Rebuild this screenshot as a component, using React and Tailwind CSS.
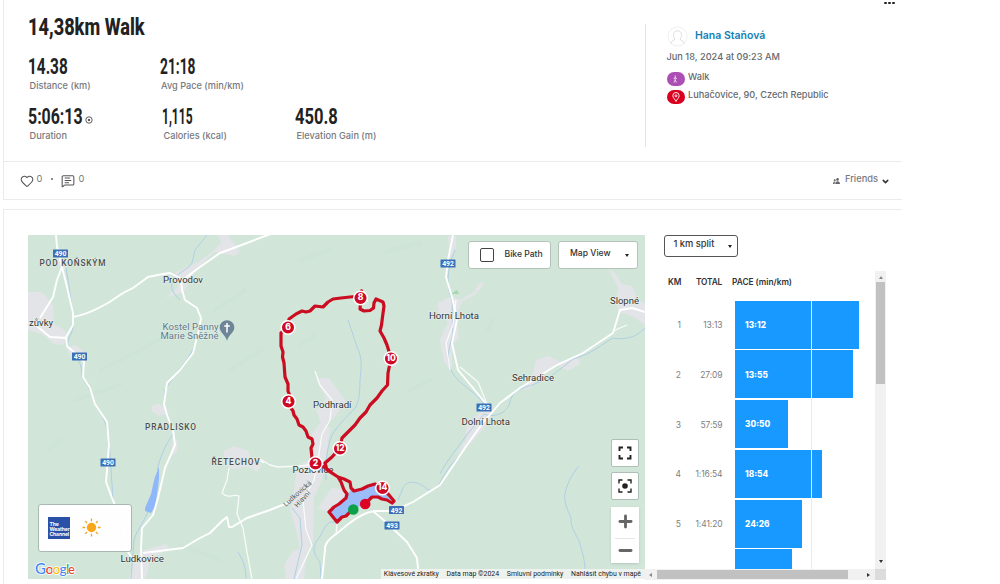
import React from "react";
import { Heart, MessageSquareText, Plus, Minus, ChevronDown } from "lucide-react";

const stats = [
  [
    { value: "14.38", label: "Distance (km)", width: "w-[131.5px]", scale: "scale-x-[0.715]" },
    { value: "21:18", label: "Avg Pace (min/km)", width: "w-[140px]", scale: "scale-x-[0.64]" },
  ],
  [
    { value: "5:06:13", label: "Duration", width: "w-[134px]", scale: "scale-x-[0.74]", info: true },
    { value: "1,115", label: "Calories (kcal)", width: "w-[133px]", scale: "scale-x-[0.56]" },
    { value: "450.8", label: "Elevation Gain (m)", width: "w-[120px]", scale: "scale-x-[0.77]" },
  ],
];

const splits = [
  { km: 1, total: "13:13", pace: "13:12", width: 124.5 },
  { km: 2, total: "27:09", pace: "13:55", width: 118 },
  { km: 3, total: "57:59", pace: "30:50", width: 53.5 },
  { km: 4, total: "1:16:54", pace: "18:54", width: 87 },
  { km: 5, total: "1:41:20", pace: "24:26", width: 67.5 },
  { km: "", total: "", pace: "", width: 57 },
];

const towns = [
  "28,292 42,292 53,305 54,324 66,331 64,345 54,344 42,334 28,330",
  "218,235 228,235 240,252 235,256 214,252 196,270 190,280 184,292 165,298 178,287 176,272 198,262 212,252 221,243",
  "66,348 76,345 84,352 80,360 70,356",
  "152,406 158,404 167,408 166,414 159,416 152,411",
  "56,260 64,258 66,270 60,268",
  "172,443 178,440 177,452 171,456",
  "224,451 234,446 249,451 250,459 262,464 257,472 248,467 232,469 223,464",
  "142,551 166,544 170,549 150,558 148,570 145,579 129,579 134,560",
  "313,369 316,378 329,378 342,396 346,402 334,418 322,426 316,410 326,398 318,384",
  "297,466 312,458 325,458 322,480 314,498 313,540 306,560 304,579 286,579 284,565 292,552 300,548 296,530 290,510 294,490",
  "312,434 322,420 330,428 326,458 315,462",
  "332,488 346,490 344,500 328,512 318,508",
  "448,236 456,236 456,248 450,258",
  "438,303 452,296 460,300 474,292 480,282 484,284 476,294 462,302 456,316 459,338 452,345 452,372 444,362 440,340 448,322 438,312",
  "536,360 549,356 560,362 578,356 580,364 568,371 556,364 544,374 530,388 524,390 532,376",
  "608,268 616,274 622,284 632,286 638,300 645,304 645,325 632,316 618,312 616,300 618,288",
  "466,426 474,418 482,410 494,412 484,428 472,442 462,450 456,454 466,440",
];

const rivers = [
  "M66,268C70,290 71,300 73,320C75,333 66,338 68,346C76,354 82,362 82,377C90,388 94,400 97,408C110,425 109,440 111,470L113,498",
  "M207,235L195,250L192,263C188,270 178,272 173,280C169,288 174,294 180,300",
  "M199,335C193,353 184,364 177,372L165,390L164,404",
  "M173,434C165,445 160,458 157,470M148,512C142,525 136,532 134,540L131,579",
  "M238,552C243,560 246,568 246,579",
  "M348,320C352,332 355,340 357,347C363,358 361,370 360,380C360,396 358,404 355,408C346,418 334,428 330,440C326,456 326,462 326,480",
  "M337,522L330,522C324,526 323,532 319,538C310,548 315,556 320,562L321,579",
  "M458,457L450,466L443,477C438,488 434,490 428,490C418,480 406,480 403,488L398,500",
  "M645,328C636,338 624,340 613,338C602,344 592,354 573,359L550,377L530,386C518,388 511,395 510,402C507,414 494,418 484,414L466,436C456,450 446,462 440,474",
  "M579,466C572,474 568,482 566,490C562,500 568,510 571,518C570,530 580,538 581,548C584,558 585,564 585,570",
  "M455,250C450,262 444,280 452,300L453,335C448,350 446,360 452,372C458,384 474,390 484,404",
  "M292,508L300,518L302,545L294,579",
];

const roads = [
  "M56,235L57,247L62,267L67,287L73,313L73,325L66,337L67,346L75,353L84,362L83,377L90,388L95,404L107,422L109,445L106,482L112,498L122,522L128,552L133,560",
  "M62,267L57,280L53,297L45,310L40,318M33,323L50,337L67,338",
  "M73,317C90,314 98,308 108,303L123,293L133,288L148,277L163,274L170,273L180,278",
  "M180,282L200,267L220,253L247,243L267,235",
  "M181,280L182,290L185,300L197,308L201,318L199,330L193,353L180,370L167,383L164,404L167,415L173,430L175,445L165,468L158,498L153,515L142,528L141,548L142,579",
  "M143,553L167,550L183,548L200,538L210,533L222,521L227,517L229,527L232,527L247,518L270,510L290,502",
  "M453,235L448,260L446,277L452,297L457,320L452,343L458,370L473,388L487,405",
  "M645,312L632,308L620,310L613,333L583,353L557,365L520,388L500,403L482,424L467,445L440,485L413,502L393,511L375,511C365,512 357,517 347,525C336,535 324,540 325,550L322,579",
  "M373,511L387,523L407,542L417,558L419,579",
];

const lanes = [
  "M229,468L227,480L222,493C230,500 234,493 239,496L237,514L243,528L247,552L252,579",
  "M252,459C260,462 260,460 264,463M260,459L270,465L278,467L300,466L310,465",
  "M456,300L453,325L446,343L450,370M460,367L478,382L487,404",
  "M613,331L627,325M337,523L336,535M318,460L314,480L303,500L306,530L312,545L296,579",
  "M315,371L320,385L332,400L330,420L322,434L318,460",
  "M260,238L270,235",
];

const TRACK =
  "M353,509L346,516L342,517L337,522L333,517L329,512L334,507L339,504L346,498L347,494L344,490L341,482L338,477L332,473L326,468L315,463L312,458L311,448L313,444L312,439L308,437L306,431L303,427L299,425L297,419L294,415L293,411L289,405L290,396L288,391L288,384L285,377L284,363L282.500,357L283,352L281,346L281,333L288,327L289,319L296,314L302,311L306,312L310,311L315,306L323,307L328,302L333,299L341,298L350,297L361,296L360,309L364,311L370,310.500L373.500,308L374,303L376,299L383,302L384,306L382.500,317L381.500,325L380,331L384,338L387,345L391,358L388,373L387.500,385L382,391L377,398L370,405L366,412L360,418L355,425L349,431L342,438L340,448L332,457L325,463L327,470L338,477L344,479L350,482L351,488L354,491L362,489L368,486L375,484L382,488L389,495L394,501L392,503L387,500L382,499L378,497L372,497L365,504";

const markers = [
  [2, 315.5, 463.5],
  [4, 288.5, 401.5],
  [6, 288, 327.5],
  [8, 360.5, 298],
  [10, 391, 358.5],
  [12, 340, 448.5],
  [14, 382.5, 488],
];

const labels = [
  ["Provodov", 163, 283, 40],
  ["zůvky", 29, 325.5, 24],
  ["Podhradí", 313, 407.5, 38.5],
  ["Pozlovice", 292.5, 473, 41],
  ["Horní Lhota", 429, 319, 50],
  ["Sehradice", 512, 381, 42],
  ["Slopné", 610, 303.5, 29],
  ["Dolní Lhota", 461.500, 424.5, 48.500],
  ["Ludkovice", 120.5, 562, 43.5],
];

const areas = [
  ["POD KOŇSKÝM", 39.5, 265.5, 66],
  ["PRADLISKO", 145, 430, 51],
  ["ŘETECHOV", 211.5, 465, 48],
];

const shields = [
  [490, 60.5, 253.5],
  [490, 79.5, 356.5],
  [490, 108, 462.5],
  [492, 448, 263.5],
  [492, 484, 407.5],
  [492, 396.5, 510],
  [493, 392, 525.5],
];

function MapDrawing() {
  return (
    <svg
      viewBox="28 235 617 344"
      preserveAspectRatio="none"
      className="block h-[344px] w-[617px] bg-[#d1e6d9]"
      fontFamily="Roboto, sans-serif"
    >
      {/* terrain shading */}
      <g fill="none" stroke="#c9e0d2" strokeWidth="4" opacity=".4" strokeLinecap="round">
        <path d="M100,370L150,345L185,322M75,400L120,385M215,310L245,290M300,260L330,250M385,252L420,243M50,450L60,440M230,370L262,350M410,390L430,380M180,545L220,560M300,345L315,335M488,330L493,320" />
      </g>
      <g fill="#e2e4e7">
        {towns.map((points) => (
          <polygon key={points} points={points} />
        ))}
      </g>
      <path d="M451,294L457,290L459,294Z" fill="#a3d8b0" />
      <g fill="none" stroke="#b0cfe4" strokeWidth="1">
        {rivers.map((d) => (
          <path key={d} d={d} />
        ))}
      </g>
      <path d="M159,467L155,477L153,485L151,494L145,508L145,511L151,513L155,507L158,488L159,478Z" fill="#90b7fa" />
      <path d="M329,512L346,498L350,491L375,485L392,500L384,500L373,497L365,504L353,509L337,522Z" fill="#9bbdfa" />
      <g fill="none" stroke="#fff" strokeLinejoin="round">
        <g strokeWidth="1.900">
          {roads.map((d) => (
            <path key={d} d={d} />
          ))}
        </g>
        <g strokeWidth="1.300" opacity=".85">
          {lanes.map((d) => (
            <path key={d} d={d} />
          ))}
        </g>
      </g>

      <g fontSize="9.8" fill="#333" stroke="#e9f2ec" strokeWidth="1.2" paintOrder="stroke">
        {labels.map(([name, x, y, w]) => (
          <text key={name} x={x} y={y} textLength={w} lengthAdjust="spacingAndGlyphs">
            {name}
          </text>
        ))}
      </g>
      <g fontSize="8.3" fill="#4a4f52" fontWeight="500" stroke="#e3efe8" strokeWidth="1" paintOrder="stroke">
        {areas.map(([name, x, y, w]) => (
          <text key={name} x={x} y={y} textLength={w}>
            {name}
          </text>
        ))}
      </g>
      <g fontSize="9.500" fill="#60788a" stroke="#e3efe8" strokeWidth="1" paintOrder="stroke">
        <text x="162.500" y="329.500" textLength="56">Kostel Panny</text>
        <text x="160.500" y="339" textLength="58">Marie Sněžné</text>
      </g>
      <g fontSize="7" fill="#555" stroke="#e9f0ec" strokeWidth=".8" paintOrder="stroke">
        <text transform="translate(286 507) rotate(-42)" textLength="35">Ludkovická</text>
        <text transform="translate(297.500 508) rotate(-48)" textLength="20">Hlavní</text>
      </g>

      <path d="M227,341C226,335 219.700,333 219.700,327.500A7.300,7.300 0 0 1 234.300,327.500C234.300,333 228,335 227,341Z" fill="#6d8597" />
      <path d="M227,323V332.500M224.200,326H229.800" stroke="#fff" strokeWidth="1.500" />

      {shields.map(([n, x, y]) => (
        <g key={`${x}-${y}`}>
          <rect x={x - 7.5} y={y - 4} width="15" height="8" rx=".5" fill="#3b70b8" />
          <text x={x} y={y + 2.5} fontSize="6.800" fontWeight="700" fill="#fff" textAnchor="middle">
            {n}
          </text>
        </g>
      ))}

      <path d={TRACK} fill="none" stroke="#cb0d22" strokeWidth="3.200" strokeLinejoin="round" />
      <circle cx="361.500" cy="291" r="1.800" fill="#cb0d22" />
      {markers.map(([n, x, y]) => (
        <g key={n}>
          <circle cx={x} cy={y} r="6.800" fill="#cf0a26" stroke="#fff" strokeWidth="1.500" />
          <text x={x} y={y + 2.4} fontSize="8.500" fontWeight="800" fill="#fff" textAnchor="middle" fontFamily="Inter, sans-serif">
            {n}
          </text>
        </g>
      ))}
      <circle cx="353.300" cy="509.500" r="5.300" fill="#0ba14b" />
      <circle cx="365.200" cy="504" r="5.300" fill="#dc0325" />

      <g fontSize="14" fontFamily="Lato, sans-serif" fontWeight="500" stroke="#fff" strokeWidth="1.500" paintOrder="stroke">
        <text x="35.500" y="574">
          <tspan x="35" fontSize="15" fill="#4285f4">G</tspan>
          <tspan x="45.500" fill="#ea4335">o</tspan>
          <tspan x="52.500" fill="#fbbc05">o</tspan>
          <tspan x="59.600" fill="#4285f4">g</tspan>
          <tspan x="66" fill="#34a853">l</tspan>
          <tspan x="68" fontSize="13" fill="#ea4335">e</tspan>
        </text>
      </g>
    </svg>
  );
}

function MapControls() {
  const box = "flex items-center justify-center rounded-[2px] border border-[#aebfb5] bg-white";
  return (
    <>
      <div className="absolute top-[6px] right-[7px] flex gap-[7px] text-[8.6px] font-medium text-[#333]">
        <div className="flex h-[28px] w-[83px] items-center rounded-[3px] border border-[#b5c2ba] bg-white pl-[10.5px]">
          <span className="size-[14px] rounded-[2px] border border-[#444]" />
          <span className="ml-[11px] -mt-[2px]">Bike Path</span>
        </div>
        <div className="flex h-[28px] w-[80px] items-center rounded-[3px] border border-[#b5c2ba] bg-white pl-[11px]">
          <span className="-mt-[4px]">Map View</span>
          <span className="ml-auto mr-[8px] border-x-[2.5px] border-t-[3px] border-x-transparent border-t-[#222]" />
        </div>
      </div>
      <div className="absolute right-[6px] top-[204px] flex w-[28px] flex-col gap-[5px] text-[#222]">
        <div className={`${box} h-[28px]`}>
          <svg viewBox="0 0 14 14" className="size-[14px]" fill="none" stroke="currentColor" strokeWidth="1.900">
            <path d="M1.500,5V1.500H5M9,1.500H12.500V5M12.500,9V12.500H9M5,12.500H1.500V9" />
          </svg>
        </div>
        <div className={`${box} h-[28px]`}>
          <svg viewBox="0 0 14 14" className="size-[14px]" fill="none" stroke="currentColor" strokeWidth="1.400">
            <path d="M1,4.500V1H4.500M9.500,1H13V4.500M13,9.500V13H9.500M4.500,13H1V9.500" />
            <circle cx="7" cy="7" r="2.800" fill="currentColor" stroke="none" />
          </svg>
        </div>
        <div className="mt-[2px] flex h-[56px] flex-col items-center justify-around bg-white text-[#666] shadow-sm">
          <Plus size={19} strokeWidth={3.6} className="mt-px" />
          <span className="h-px w-[20px] bg-[#e6e6e6]" />
          <Minus size={19} strokeWidth={3.6} className="-mt-[5px]" />
        </div>
      </div>
      <div className="absolute left-[10px] top-[268.500px] flex h-[48px] w-[94px] items-center rounded-[3px] border border-[#a9b9b0] bg-white/95 pl-[9px]">
        <div className="h-[22px] w-[22px] bg-[#2b50a8] pt-[5px] pl-[1.500px] font-['Inter',sans-serif] text-[5px] font-bold leading-[5px] tracking-[-0.1px] text-white">
          The
          <br />
          Weather
          <br />
          Channel
        </div>
        <svg viewBox="0 0 18 18" className="ml-[12px] size-[19px]" stroke="#f2a31b" strokeWidth="1.200">
          <circle cx="9" cy="9" r="4.400" fill="#f9a61a" stroke="none" />
          <path d="M9,.5V3M9,15V17.500M.5,9H3M15,9H17.500M3,3L4.800,4.800M13.200,13.200L15,15M3,15L4.800,13.200M13.200,4.800L15,3" />
        </svg>
      </div>
      <div className="absolute bottom-0 right-0 flex h-[10px] items-center gap-[7.7px] bg-[#edf2ef] pl-[3px] pr-[4px] pt-px font-['Roboto',sans-serif] text-[6.95px] whitespace-nowrap text-[#222]">
        <span>Klávesové zkratky</span>
        <span>Data map ©2024</span>
        <span>Smluvní podmínky</span>
        <span>Nahlásit chybu v mapě</span>
      </div>
    </>
  );
}

function Splits() {
  return (
    <div className="flex-1 pl-[6px]">
      <div className="ml-[13px] flex h-[22px] w-[73.500px] items-center rounded-[3px] border border-[#555] pl-[8.500px] text-[9.300px] font-medium text-[#333]">
        <span className="-mt-[4px]">1 km split</span>
        <span className="ml-auto mr-[5px] border-x-[2.5px] border-t-[3px] border-x-transparent border-t-[#222]" />
      </div>
      <div className="mt-[14px] flex h-[298px]">
        <div className="relative h-[298px] w-[224px] overflow-hidden">
          <div className="flex h-[29.500px] pt-[5px] text-[8.300px] font-semibold text-[#333]">
            <span className="w-[45px] pl-[17px]">KM</span>
            <span className="w-[36px] tracking-[-0.15px]">TOTAL</span>
            <span>PACE (min/km)</span>
          </div>
          {splits.map((s, i) => (
            <div key={i} className="flex h-[49.800px] items-center text-[8.500px] text-[#808080]">
              <span className="w-[30px] text-right">{s.km}</span>
              <span className="w-[41.500px] text-right tracking-[-0.1px]">{s.total}</span>
              <div
                className="ml-[12px] flex h-[48px] items-center self-start bg-[#1899ff] pl-[10.500px] pt-px text-[8.300px] font-extrabold text-white"
                style={{ width: s.width }}
              >
                {s.pace}
              </div>
            </div>
          ))}
          <div className="absolute bottom-0 left-[160px] top-[29.500px] w-px bg-[#e3edf3]" />
        </div>
        <div className="flex w-[11px] flex-col items-center bg-[#f1f1f1]">
          <span className="mt-[5px] mb-[3px] border-x-[2.5px] border-b-[3px] border-x-transparent border-b-[#888]" />
          <span className="h-[102px] w-[9px] bg-[#c1c1c1]" />
          <span className="mt-auto mb-[6px] border-x-[2.5px] border-t-[3px] border-x-transparent border-t-[#333]" />
        </div>
      </div>
      <div className="-ml-[6px] flex h-[11px] w-[241px] items-center bg-[#f1f1f1]">
        <span className="ml-[4px] mr-[5px] border-y-[2.5px] border-r-[3px] border-y-transparent border-r-[#888]" />
        <span className="h-[9px] w-[191px] bg-[#c1c1c1]" />
        <span className="ml-auto mr-[5px] border-y-[2.5px] border-l-[3px] border-y-transparent border-l-[#333]" />
        <span className="h-full w-[11px] bg-[#dcdcdc]" />
      </div>
    </div>
  );
}

export default function App() {
  return (
    <div className="h-[584px] w-[1000px] overflow-hidden bg-white font-['Inter',sans-serif] text-[#222]">
      <section className="h-[199.500px] w-[899px] ml-[3px] border-b border-l border-[#ebebeb]">
        <div className="flex h-[161.500px] border-b border-[#ebebeb]">
          <div className="w-[641px] pl-[24px] pt-[12px]">
            <h1 className="h-[30px] origin-left scale-x-[0.742] font-['Roboto',sans-serif] text-[24.500px] font-extrabold leading-[29px] whitespace-nowrap">
              14,38km Walk
            </h1>
            {stats.map((row, i) => (
              <div key={i} className="flex h-[50px] pt-[13px]">
                {row.map((s) => (
                  <div key={s.label} className={s.width}>
                    <div className="flex h-[22px] items-center">
                      <span
                        className={`inline-block w-[57px] origin-left ${s.scale} font-['Roboto',sans-serif] text-[21.500px] font-bold leading-[23px] whitespace-nowrap`}
                      >
                        {s.value}
                      </span>
                      {s.info && (
                        <svg viewBox="0 0 8 8" className="mt-[8px] size-[8px]" fill="none" stroke="#333" strokeWidth=".8">
                          <circle cx="4" cy="4" r="3.200" />
                          <circle cx="4" cy="4" r=".8" fill="#333" />
                        </svg>
                      )}
                    </div>
                    <div className="ml-[1.5px] mt-[3px] text-[9.200px] font-medium leading-[12px] whitespace-nowrap text-[#77797d]">
                      {s.label}
                    </div>
                  </div>
                ))}
              </div>
            ))}
          </div>
          <div className="mt-[24px] h-[123px] w-[204px] border-l border-[#e3e3e3] pl-[20.500px] text-[9.200px] font-medium text-[#66696d]">
            <div className="flex h-[24px] items-center">
              <svg viewBox="0 0 22 22" className="size-[21px]" fill="none" stroke="#dcdcdc" strokeWidth="1">
                <circle cx="11" cy="11" r="10" stroke="#eee" />
                <path d="M4,18.500C4,15 8.500,15.500 8.300,13.500C6,11 6,5 11,5S16,11 13.700,13.500C13.500,15.500 18,15 18,18.500" />
              </svg>
              <span className="ml-[7.500px] text-[10.500px] font-semibold text-[#1580b8]">Hana Staňová</span>
            </div>
            <div className="mt-[2px] h-[14px] leading-[14px] tracking-[0.02px]">Jun 18, 2024 at 09:23 AM</div>
            <div className="mt-[8px] flex h-[14px]">
              <span className="flex h-[14px] w-[18px] items-center justify-center rounded-full bg-[#ac4fb5]">
                <svg viewBox="0 0 8 10" className="h-[8px]" fill="none" stroke="#fff" strokeWidth=".9">
                  <circle cx="4" cy="1.300" r=".8" fill="#fff" stroke="none" />
                  <path d="M4,2.500V6L2.500,9.500M4,6L5.500,9.500M2.300,5L4,3L6,5" />
                </svg>
              </span>
              <span className="ml-[3.500px] leading-[10px]">Walk</span>
            </div>
            <div className="mt-[4px] flex h-[14px]">
              <span className="flex h-[14px] w-[18px] items-center justify-center rounded-full bg-[#d9001f]">
                <svg viewBox="0 0 8 10" className="h-[10px]" fill="none" stroke="#fff" strokeWidth=".9">
                  <path d="M4,9.500C3.500,7.500 .8,6 .8,3.700A3.200,3.200 0 0 1 7.200,3.700C7.200,6 4.500,7.500 4,9.500Z" />
                  <circle cx="4" cy="3.800" r="1" />
                </svg>
              </span>
              <span className="ml-[3.500px] leading-[10px] whitespace-nowrap">Luhačovice, 90, Czech Republic</span>
            </div>
          </div>
          <div className="mt-[1.500px] ml-[35px] flex h-[2px] gap-[1.500px]">
            <span className="size-[2.500px] rounded-full bg-[#222]" />
            <span className="size-[2.500px] rounded-full bg-[#222]" />
            <span className="size-[2.500px] rounded-full bg-[#222]" />
          </div>
        </div>
        <div className="flex h-[37px] items-center pl-[16px] text-[9.300px] text-[#777]">
          <Heart size={14} strokeWidth={1.8} className="mt-[2px] text-[#555]" />
          <span className="ml-[2.500px] -mt-[3px]">0</span>
          <span className="ml-[8.500px] -mt-[2px] size-[2px] rounded-full bg-[#666]" />
          <MessageSquareText size={14} strokeWidth={1.8} className="ml-[8px] mt-[2px] text-[#555]" />
          <span className="ml-[3.500px] -mt-[3px]">0</span>
          <svg viewBox="0 0 8 7" className="ml-auto mt-[3px] w-[7px]" fill="#666">
            <circle cx="5.200" cy="1.600" r="1.500" />
            <path d="M2.500,6.800C2.500,2.800 8,2.800 8,6.800Z" />
            <circle cx="2" cy="2.700" r="1.200" />
            <path d="M0,6.800C0,4.500 1,4 2.200,4.300L1.800,6.800Z" />
          </svg>
          <span className="ml-[5px] -mt-[3px] font-medium text-[#77797d]">Friends</span>
          <ChevronDown size={9} strokeWidth={4} className="ml-[3px] mr-[12px] mt-[2px] text-[#333]" />
        </div>
      </section>

      <section className="mt-[9.500px] ml-[3px] h-[375px] w-[899px] border-l border-t border-[#ebebeb] pl-[24px] pt-[25px]">
        <div className="flex">
          <div className="relative h-[344px] w-[617px] shrink-0">
            <MapDrawing />
            <MapControls />
          </div>
          <Splits />
        </div>
      </section>
    </div>
  );
}
